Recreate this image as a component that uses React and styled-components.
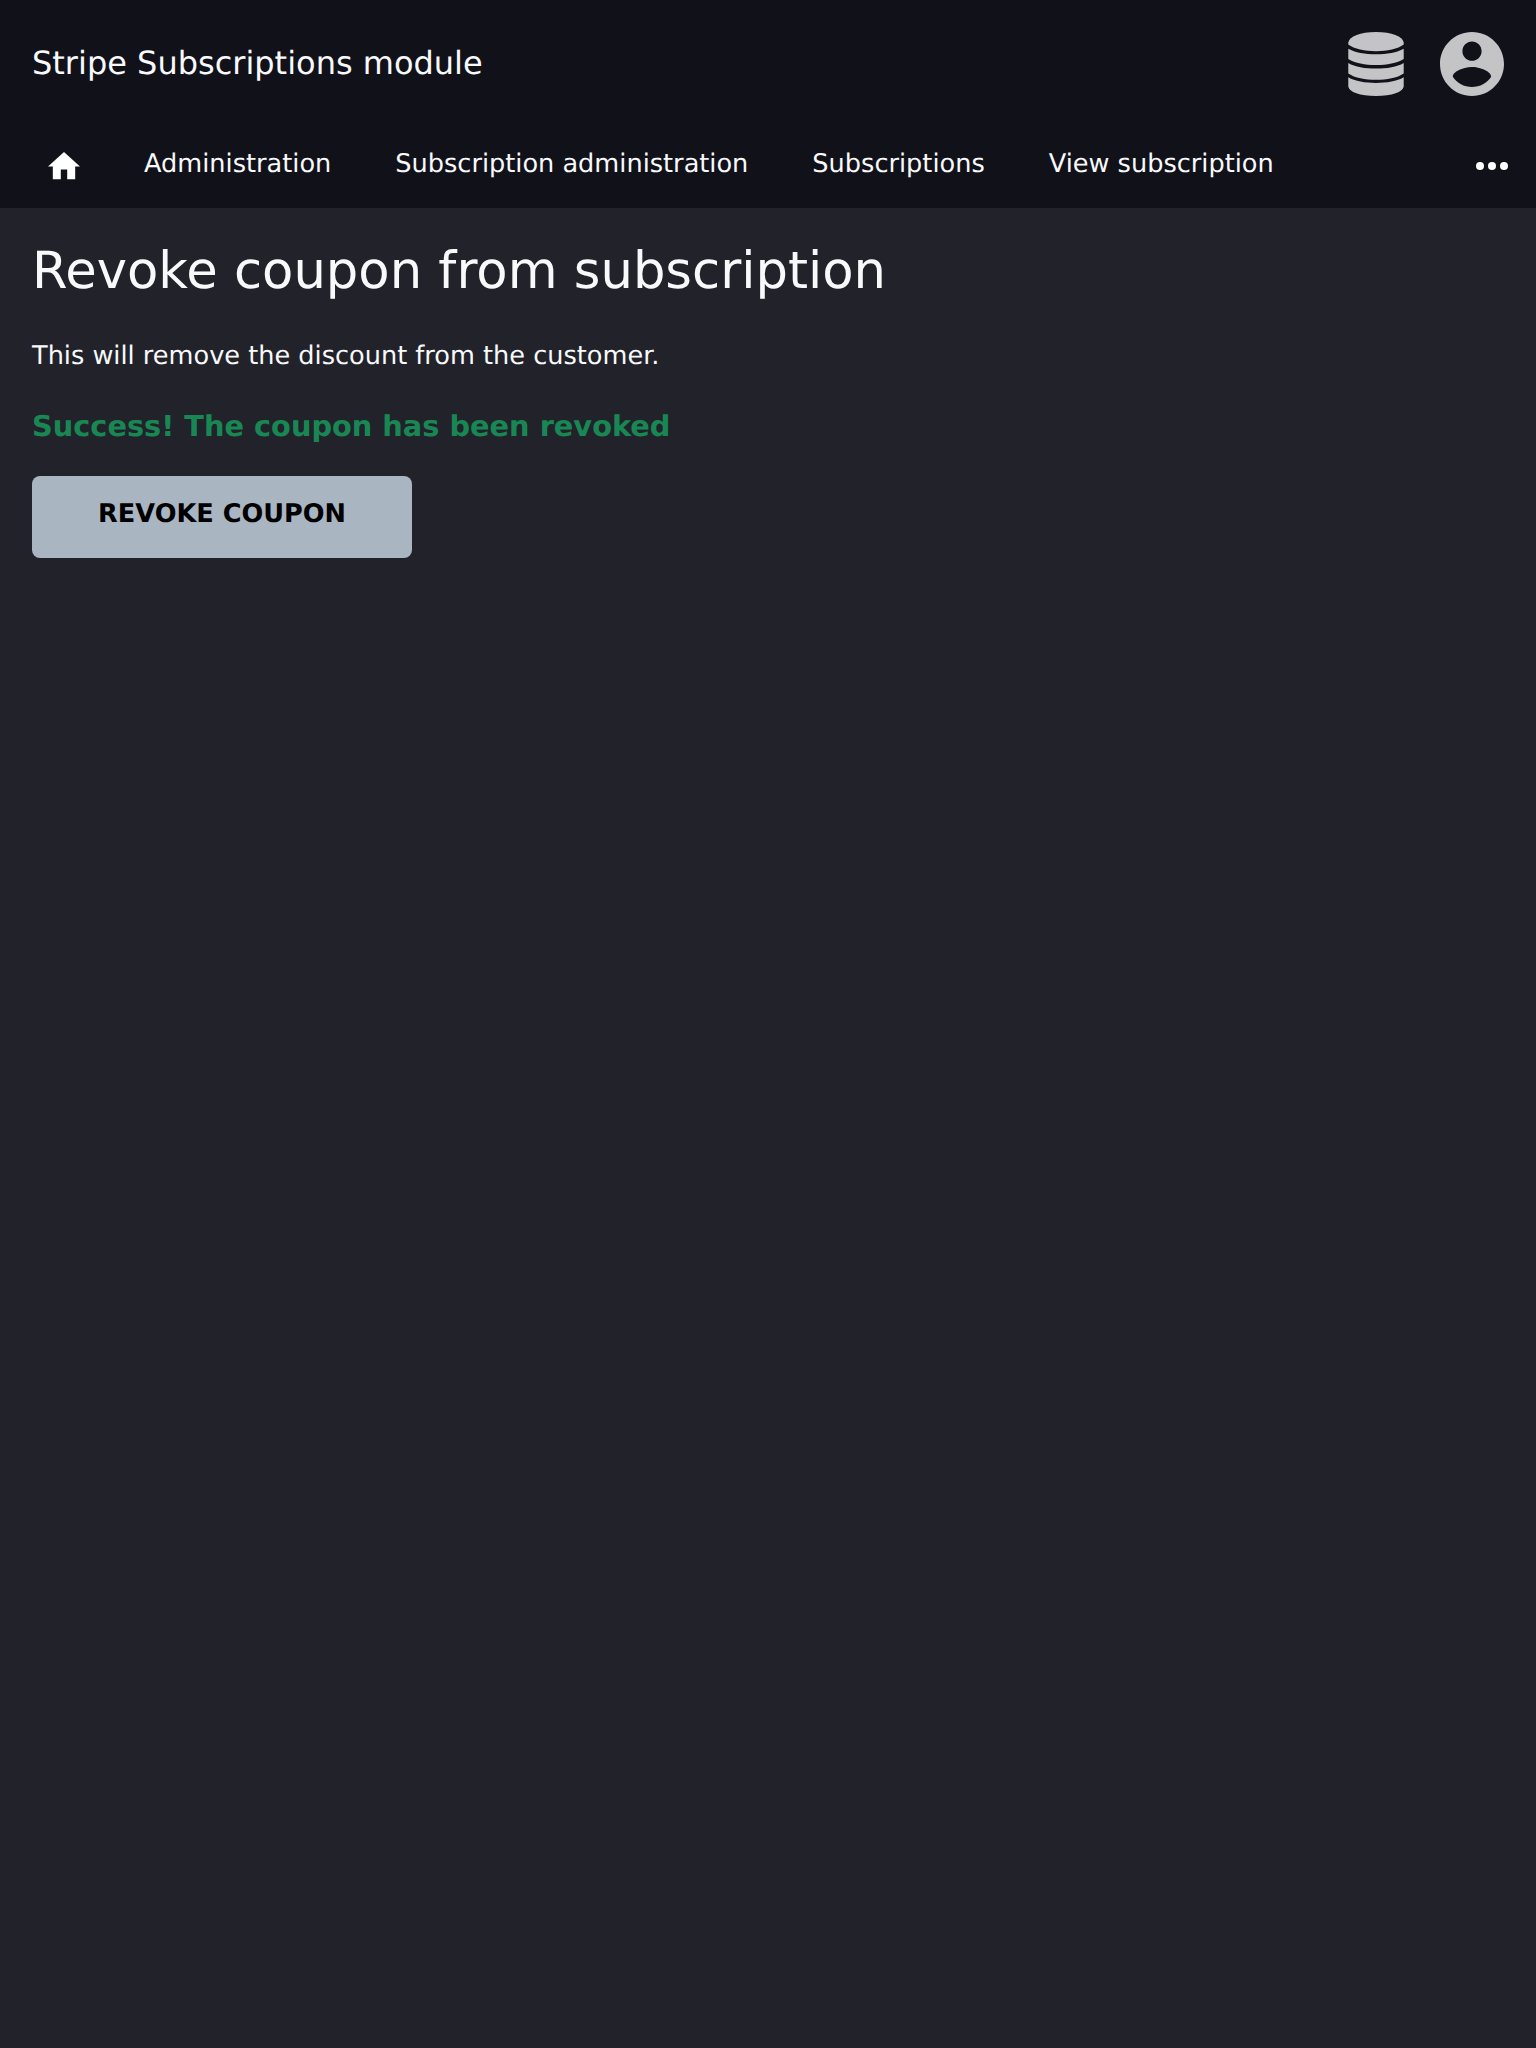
import React from "react";
import styled, { createGlobalStyle } from "styled-components";

const GlobalStyle = createGlobalStyle`
  * { box-sizing: border-box; }
  body {
    margin: 0;
    background: #22222a;
    color: #f8f9fb;
    font-family: "DejaVu Sans", sans-serif;
    font-size: 25.6px;
    text-rendering: geometricPrecision;
  }
`;

const Page = styled.div`
  min-height: 100vh;
`;

const Header = styled.header`
  height: 208px;
  background: #11111a;
`;

const TopBar = styled.div`
  display: flex;
  align-items: center;
  justify-content: space-between;
  height: 128px;
  padding: 0 32px;
`;

const Brand = styled.div`
  font-size: 32px;
  line-height: 40px;
  padding-bottom: 2px;
`;

const Actions = styled.div`
  display: flex;
  gap: 36px;
`;

const Icon = styled.svg`
  display: block;
  flex: none;
  width: ${(p) => p.$w}px;
  height: ${(p) => p.$h}px;
  fill: ${(p) => p.$color || "#ffffff"};
`;

const Nav = styled.nav`
  display: flex;
  align-items: center;
  height: 80px;
  padding: 0 28px 4px 48px;
`;

const NavLink = styled.a`
  margin-left: 64px;
  padding-bottom: 4px;
  line-height: 32px;
  white-space: nowrap;
`;

const More = styled.div`
  margin-left: auto;
`;

const Main = styled.main`
  display: flex;
  flex-direction: column;
  align-items: flex-start;
  padding: 33px 32px 32px;
`;

const Title = styled.h1`
  margin: 0;
  font-size: 51.2px;
  font-weight: 400;
  line-height: 60px;
`;

const Text = styled.p`
  margin: 39px 0 0;
  line-height: 32px;
`;

const Success = styled.p`
  margin: 36px 0 0;
  color: #198754;
  font-size: 28.8px;
  font-weight: 700;
  line-height: 36px;
`;

const Button = styled.button`
  width: 380px;
  height: 82px;
  margin-top: 32px;
  padding: 0 0 6px;
  border: 0;
  border-radius: 8px;
  background: #a9b5c0;
  color: #000;
  font: 700 25.6px/32px "DejaVu Sans", sans-serif;
  text-rendering: inherit;
  text-transform: uppercase;
`;

const links = ["Administration", "Subscription administration", "Subscriptions", "View subscription"];

export default function App() {
  return (
    <Page>
      <GlobalStyle />
      <Header>
        <TopBar>
          <Brand>Stripe Subscriptions module</Brand>
          <Actions>
            <Icon $w={56} $h={64} $color="#c4c4c6" viewBox="0 0 56 64">
              <path d="M0.300 10.500C1.500 4.500 12 0 28 0s26.500 4.500 27.700 10.500v2C50 17 39 19.200 28 19.200S6 17 0.300 12.500z" />
              <path d="M0.300 16.700C7 20.500 17 22.200 28 22.200s21-1.700 27.700-5.500v10.300C49 31.300 39 33 28 33S7 31.300 0.300 27z" />
              <path d="M0.300 31C7 35 17 36.600 28 36.600s21-1.600 27.700-5.600v10.500C49 46 39 47.800 28 47.800S7 46 0.300 41.500z" />
              <path d="M0.300 45.300C7 49.300 17 51 28 51s21-1.700 27.700-5.700V54.500C55 60 44 64 28 64S1 60 0.300 54.500z" />
            </Icon>
            <Icon $w={64} $h={64} $color="#c4c4c6" viewBox="2 2 20 20">
              <path d="M12 2C6.480 2 2 6.480 2 12s4.480 10 10 10 10-4.480 10-10S17.520 2 12 2zm0 3c1.660 0 3 1.340 3 3s-1.340 3-3 3-3-1.340-3-3 1.340-3 3-3zm0 14.200c-2.500 0-4.710-1.280-6-3.220.03-1.990 4-3.080 6-3.080 1.990 0 5.970 1.090 6 3.080-1.290 1.940-3.500 3.220-6 3.220z" />
            </Icon>
          </Actions>
        </TopBar>
        <Nav>
          <Icon $w={32} $h={27.2} viewBox="2 3 20 17">
            <path d="M10 20v-6h4v6h5v-8h3L12 3 2 12h3v8z" />
          </Icon>
          {links.map((l) => (
            <NavLink key={l}>{l}</NavLink>
          ))}
          <More>
            <Icon $w={32} $h={8} viewBox="0 0 32 8">
              <circle cx="4" cy="4" r="4" />
              <circle cx="16" cy="4" r="4" />
              <circle cx="28" cy="4" r="4" />
            </Icon>
          </More>
        </Nav>
      </Header>
      <Main>
        <Title>Revoke coupon from subscription</Title>
        <Text>This will remove the discount from the customer.</Text>
        <Success>Success! The coupon has been revoked</Success>
        <Button>Revoke coupon</Button>
      </Main>
    </Page>
  );
}
